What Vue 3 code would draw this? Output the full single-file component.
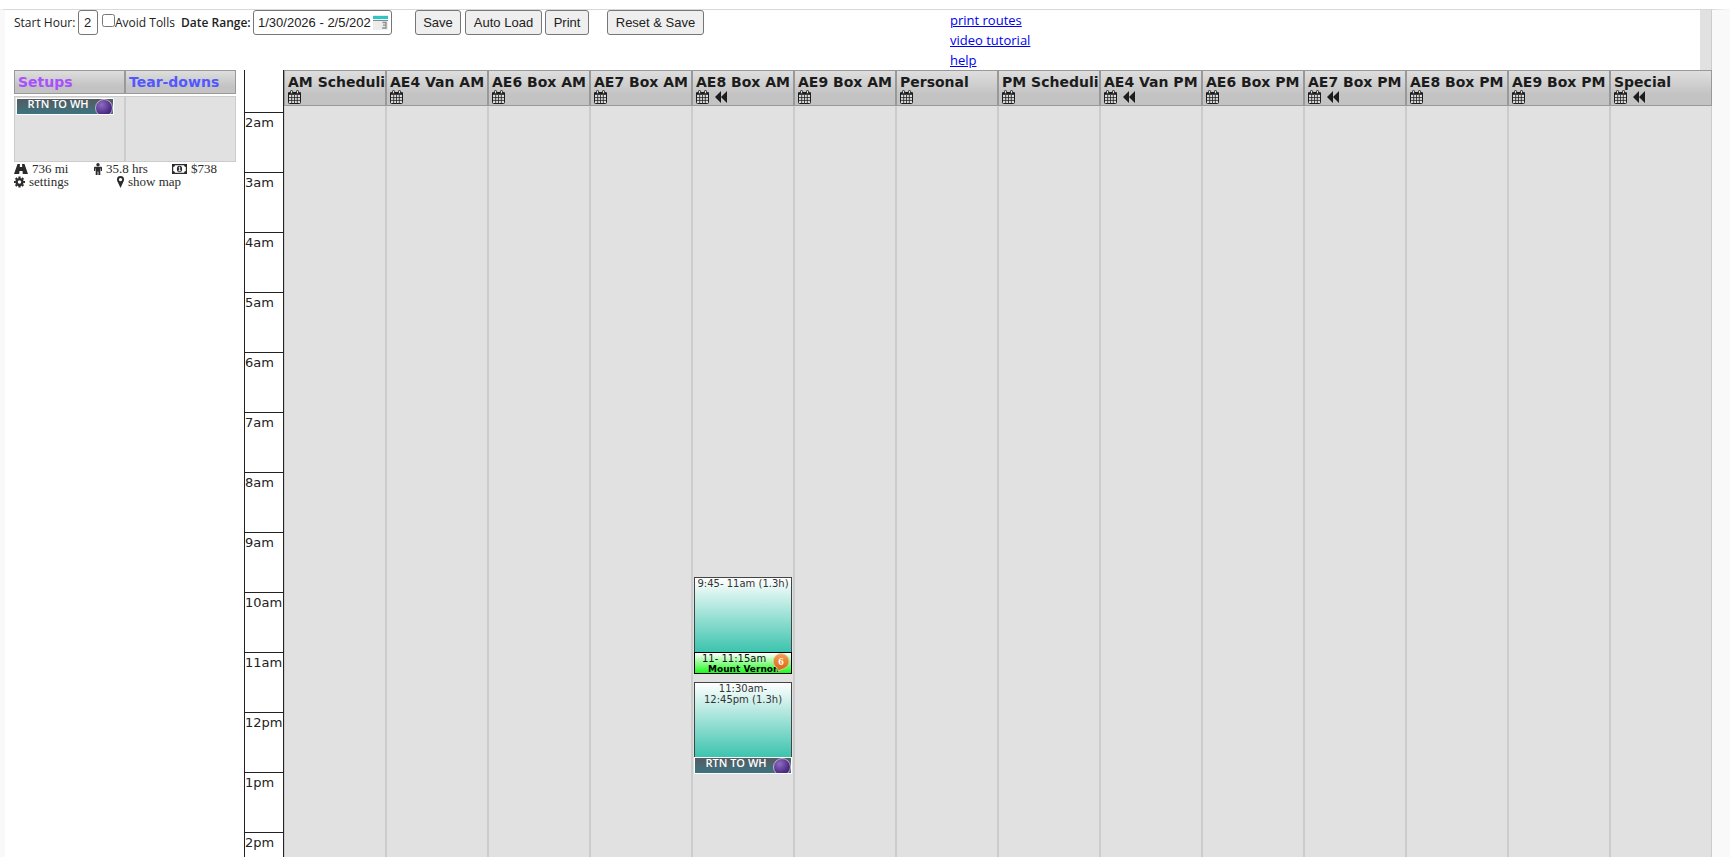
<script setup>
import { ref } from 'vue'

const startHour = ref('2')
const avoidTolls = ref(false)
const dateRange = ref('1/30/2026 - 2/5/2026')

const FIRST_HOUR = 2
const HOUR_HEIGHT = 60
const GRID_OFFSET = 6

const hours = ['2am', '3am', '4am', '5am', '6am', '7am', '8am', '9am', '10am', '11am', '12pm', '1pm', '2pm']

const events = [
  { kind: 'drive', start: 9.75, height: 76, lines: ['9:45- 11am (1.3h)'] },
  { kind: 'stop', start: 11, height: 22, lines: ['11- 11:15am'], place: 'Mount Vernon' },
  { kind: 'drive', start: 11.5, height: 76, lines: ['11:30am-', '12:45pm (1.3h)'] },
  { kind: 'return', start: 12.75, height: 17, lines: ['RTN TO WH'] },
]

const columns = [
  { name: 'AM Scheduling' },
  { name: 'AE4 Van AM' },
  { name: 'AE6 Box AM' },
  { name: 'AE7 Box AM' },
  { name: 'AE8 Box AM', rewind: true, events },
  { name: 'AE9 Box AM' },
  { name: 'Personal' },
  { name: 'PM Scheduling' },
  { name: 'AE4 Van PM', rewind: true },
  { name: 'AE6 Box PM' },
  { name: 'AE7 Box PM', rewind: true },
  { name: 'AE8 Box PM' },
  { name: 'AE9 Box PM' },
  { name: 'Special', rewind: true },
]

const place = (e) => ({
  top: `${GRID_OFFSET + (e.start - FIRST_HOUR) * HOUR_HEIGHT}px`,
  height: `${e.height}px`,
})
</script>

<template>
  <div class="page">
    <div class="sheet">
      <header class="toolbar">
        <form class="controls" @submit.prevent>
          <label for="start-hour">Start Hour:</label>
          <input id="start-hour" v-model="startHour" class="field hour" type="text" />
          <input id="avoid-tolls" v-model="avoidTolls" class="tick" type="checkbox" />
          <label for="avoid-tolls">Avoid Tolls</label>
          <label for="date-range" class="strong">Date Range:</label>
          <span class="date">
            <input id="date-range" v-model="dateRange" class="field" type="text" />
            <svg class="date-icon" viewBox="0 0 15 15" aria-hidden="true">
              <rect width="15" height="15" fill="#ececec" />
              <rect y="1" width="15" height="3" fill="#2fc5c5" />
              <rect y="4" width="15" height="1" fill="#e8fafa" />
              <rect y="5" width="15" height="1" fill="#888" />
              <path d="M9.500 7.500H13V13H9.200M10 10.200h3" fill="none" stroke="#8c8c8c" stroke-width="1.300" />
            </svg>
          </span>
          <button class="btn save" type="button">Save</button>
          <button class="btn load" type="button">Auto Load</button>
          <button class="btn print" type="button">Print</button>
          <button class="btn reset" type="button">Reset &amp; Save</button>
        </form>
        <nav class="links">
          <a href="#routes">print routes</a>
          <a href="#tutorial">video tutorial</a>
          <a href="#help">help</a>
        </nav>
        <div class="edge"></div>
      </header>

      <main class="board">
        <aside class="side">
          <div class="pair heads">
            <div class="cell head setups">Setups</div>
            <div class="cell head teardowns">Tear-downs</div>
          </div>
          <div class="pair bins">
            <div class="cell bin">
              <div class="event return chip">
                <span>RTN TO WH</span>
                <i class="orb"></i>
              </div>
            </div>
            <div class="cell bin"></div>
          </div>
          <div class="totals">
            <span class="stat miles">
              <svg width="14" height="12" viewBox="0 0 14 12" aria-hidden="true">
                <path d="M3.500 1H6l-.2 2h2.400L8 1h2.500L14 11H8.800l-.3-3h-3l-.3 3H0z" fill="#2b2b2b" />
                <path d="M6 4h2l.2 2.500H5.800z" fill="#2b2b2b" />
                <path d="M5.800 3.500h2.400" stroke="#fff" stroke-width="1" />
              </svg>
              736 mi
            </span>
            <span class="stat time">
              <svg width="8" height="12" viewBox="0 0 8 12" aria-hidden="true">
                <circle cx="4" cy="1.700" r="1.700" fill="#2b2b2b" />
                <path d="M1 3.700h6q1 0 1 1V8H6.800V5.500H6.300V12H4.400V8.500h-.8V12H1.700V5.500h-.5V8H0V4.700q0-1 1-1z" fill="#2b2b2b" />
              </svg>
              35.8 hrs
            </span>
            <span class="stat">
              <svg width="15" height="10" viewBox="0 0 15 10" aria-hidden="true">
                <path d="M0 0h15v10H0zM3 1.200Q2.800 2.800 1.200 3v4Q2.800 7.200 3 8.800h9Q12.200 7.200 13.800 7V3Q12.200 2.800 12 1.200z" fill="#2b2b2b" fill-rule="evenodd" />
                <ellipse cx="7.500" cy="5" rx="2.600" ry="3.200" fill="#2b2b2b" />
                <path d="M6.700 3.700l1-.7v3.600M6.400 6.800h2.400" fill="none" stroke="#fff" stroke-width="1" />
              </svg>
              $738
            </span>
          </div>
          <div class="totals">
            <span class="stat settings">
              <svg width="11" height="12" viewBox="0 0 12 12" aria-hidden="true">
                <circle cx="6" cy="6" r="3.200" fill="none" stroke="#2b2b2b" stroke-width="2.600" />
                <path d="M6 0v2M6 10v2M0 6h2M10 6h2M1.800 1.800l1.300 1.300M8.900 8.900l1.300 1.300M1.800 10.200l1.300-1.300M8.900 3.100l1.300-1.300" stroke="#2b2b2b" stroke-width="2.400" />
              </svg>
              settings
            </span>
            <span class="stat">
              <svg width="7" height="12" viewBox="0 0 7 12" aria-hidden="true">
                <path d="M3.500 0a3.500 3.500 0 0 1 3.500 3.600c0 1.200-.3 1.800-.7 2.500L3.500 12 .7 6.100C.3 5.400 0 4.800 0 3.600A3.500 3.500 0 0 1 3.500 0zm0 1.900a1.700 1.700 0 1 0 0 3.400 1.700 1.700 0 0 0 0-3.400z" fill="#2b2b2b" fill-rule="evenodd" />
              </svg>
              show map
            </span>
          </div>
        </aside>

        <div class="hours">
          <div class="hour-pad"></div>
          <div v-for="h in hours" :key="h" class="hour-row">{{ h }}</div>
        </div>

        <div class="columns">
          <section v-for="c in columns" :key="c.name" class="column">
            <div class="column-head">
              <div class="title">{{ c.name }}</div>
              <div class="tools">
                <svg width="13" height="14" viewBox="0 0 13 14" aria-hidden="true">
                  <rect x="0.500" y="2.500" width="12" height="11" rx="1" fill="#ddd" stroke="#1c1c1c" />
                  <path d="M0 2.500h13v2.300H0z" fill="#1c1c1c" />
                  <path d="M3.700 5v8M6.500 5v8M9.300 5v8M1 7.600h11M1 10.400h11" stroke="#1c1c1c" stroke-width="0.800" />
                  <rect x="2.500" y="0.500" width="2" height="3.200" rx="0.800" fill="#ddd" stroke="#1c1c1c" stroke-width="0.900" />
                  <rect x="8.500" y="0.500" width="2" height="3.200" rx="0.800" fill="#ddd" stroke="#1c1c1c" stroke-width="0.900" />
                </svg>
                <svg v-if="c.rewind" width="12" height="12" viewBox="0 0 12 12" aria-hidden="true">
                  <path d="M6 0v12L0 6zM12 0v12L6 6z" fill="#1c1c1c" />
                </svg>
              </div>
            </div>
            <div class="column-body">
              <div v-for="(e, i) in c.events" :key="i" class="event" :class="e.kind" :style="place(e)">
                <span v-for="l in e.lines" :key="l">{{ l }}</span>
                <b v-if="e.place">{{ e.place }}</b>
                <i v-if="e.kind === 'return'" class="orb"></i>
                <svg v-if="e.kind === 'stop'" class="pin" width="17" height="19" viewBox="0 0 17 19" aria-hidden="true">
                  <defs>
                    <linearGradient id="pin-fill" x1="0" y1="0" x2="0" y2="1">
                      <stop offset="0" stop-color="#f6a052" />
                      <stop offset="1" stop-color="#d95f0e" />
                    </linearGradient>
                  </defs>
                  <path d="M8.500.7a7.700 7.700 0 0 1 2 15.100q-2.700.6-5.500 2.600l-.2-3A7.700 7.700 0 0 1 8.500.7z" fill="url(#pin-fill)" stroke="#d9c9a0" stroke-width="1" />
                  <text x="8" y="12" text-anchor="middle">6</text>
                </svg>
              </div>
            </div>
          </section>
        </div>
      </main>
    </div>
  </div>
</template>

<style>
body {
  background: #fff;
}
</style>

<style scoped>
.page {
  box-sizing: border-box;
  height: 100vh;
  padding-top: 9px;
  overflow: hidden;
}

.page * {
  box-sizing: border-box;
}

.sheet {
  display: flex;
  flex-direction: column;
  height: 100%;
  border-top: 1px solid #d8d8d8;
  border-left: 5px solid #f9f9f9;
  border-right: 18px solid #f9f9f9;
}

.toolbar {
  display: grid;
  grid-template-columns: 945px 1fr 12px;
  flex: none;
  height: 60px;
}

.controls {
  display: flex;
  align-items: center;
  height: 25px;
  padding-left: 9px;
  color: #222;
  font: 12px/16px "Open Sans", "Noto Sans", sans-serif;
  white-space: nowrap;
}

.controls label[for="start-hour"] {
  width: 64px;
}

.controls label[for="avoid-tolls"] {
  width: 66px;
}

.controls .strong {
  width: 72px;
  font-weight: 600;
}

.field {
  width: 139px;
  height: 25px;
  padding: 0 4px;
  border: 1px solid #767676;
  border-radius: 3px;
  background: #fff;
  color: #222;
  font: 13px "Liberation Sans", Arial, sans-serif;
}

.hour {
  width: 20px;
  padding: 0 5px;
}

.tick {
  width: 13px;
  height: 13px;
  margin: 0 0 4px 4px;
}

.date {
  position: relative;
  display: flex;
  margin-right: 23px;
}

.date .field {
  padding-right: 20px;
}

.date-icon {
  position: absolute;
  top: 5px;
  right: 4px;
  width: 15px;
  height: 15px;
}

.btn {
  height: 25px;
  padding: 0;
  border: 1px solid #767676;
  border-radius: 3px;
  background: #efefef;
  color: #222;
  font: 13px "Liberation Sans", Arial, sans-serif;
}

.save {
  width: 46px;
  margin-right: 4px;
}

.load {
  width: 77px;
  margin-right: 3px;
}

.print {
  width: 44px;
  margin-right: 18px;
}

.reset {
  width: 97px;
}

.links {
  display: flex;
  flex-direction: column;
  align-items: flex-start;
  font: 13px/20px "Open Sans", "Noto Sans", sans-serif;
}

.links a {
  color: #00e;
}

.edge {
  border-right: 1px solid #ccc;
  background: #e1e1e1;
}

.board {
  display: flex;
  flex: 1;
  min-height: 0;
}

.side {
  flex: none;
  width: 239px;
  padding: 0 8px 0 9px;
}

.pair {
  display: grid;
  grid-template-columns: 1fr 1fr;
}

.heads {
  height: 24px;
  margin-bottom: 2px;
}

.bins {
  height: 66px;
}

.cell {
  border: 1px solid #ccc;
  background: #e1e1e1;
}

.head {
  padding-left: 3px;
  border-color: #999;
  background: linear-gradient(#dedede, #c3c3c3 70%);
  font: 700 14px/22px "DejaVu Sans", Verdana, sans-serif;
}

.setups {
  color: #a94fff;
}

.teardowns {
  color: #5257ff;
}

.bin {
  padding: 1px;
}

.totals {
  display: flex;
  height: 13px;
  color: #2b2b2b;
  font: 13px/13px "Liberation Serif", "Times New Roman", serif;
}

.stat {
  display: flex;
  align-items: center;
  gap: 4px;
}

.miles {
  width: 80px;
}

.time {
  width: 78px;
}

.settings {
  width: 103px;
}

.hours {
  flex: none;
  width: 40px;
  border-left: 1px solid #222;
  border-right: 1px solid #222;
  overflow: hidden;
  color: #222;
  font: 13px/20px "DejaVu Sans", Verdana, sans-serif;
}

.hour-pad {
  height: 42px;
}

.hour-row {
  height: 60px;
  border-top: 1px solid #222;
}

.columns {
  display: flex;
  flex: 1;
  min-width: 0;
}

.column {
  display: flex;
  flex: 1 1 0;
  flex-direction: column;
  min-width: 0;
}

.column-head {
  flex: none;
  height: 36px;
  padding-left: 3px;
  border: 1px solid #999;
  background: linear-gradient(#dedede, #c3c3c3 70%);
  overflow: hidden;
}

.title {
  height: 19px;
  overflow: hidden;
  color: #1c1c1c;
  font: 700 14px/22px "DejaVu Sans", Verdana, sans-serif;
  white-space: nowrap;
}

.tools {
  display: flex;
  align-items: center;
  gap: 6px;
  height: 14px;
}

.column-body {
  position: relative;
  flex: 1;
  border: 1px solid #ccc;
  border-top: 0;
  border-bottom: 0;
  background: #e1e1e1;
}

.event {
  position: absolute;
  right: 1px;
  left: 1px;
  display: flex;
  flex-direction: column;
  align-items: center;
  border: 1px solid #444;
  overflow: hidden;
  color: #333;
  font: 10px/11px "DejaVu Sans", Verdana, sans-serif;
  white-space: nowrap;
}

.drive {
  background: linear-gradient(#fff, #3cc4ae);
}

.stop {
  z-index: 1;
  align-items: flex-start;
  padding-left: 7px;
  border-color: #000;
  background: linear-gradient(#fff, #1dfa1d);
  color: #111;
}

.stop b {
  padding-left: 6px;
  color: #000;
  font-size: 9px;
}

.return {
  z-index: 1;
  padding-right: 14px;
  border-color: #fff;
  background: linear-gradient(#545b61, #3c7480);
  color: #fff;
  font: 600 11px/10px "Open Sans", "Noto Sans", sans-serif;
}

.chip {
  position: relative;
  right: auto;
  left: auto;
  width: 98px;
  height: 17px;
}

.orb {
  position: absolute;
  top: 0;
  right: 0;
  width: 18px;
  height: 18px;
  border: 1px solid #b9b3c4;
  border-radius: 50%;
  background: radial-gradient(circle at 35% 30%, #8e6cc4, #4f2d86 60%, #37206a);
}

.pin {
  position: absolute;
  top: 0;
  right: 1px;
}

.pin text {
  fill: #fff;
  font: 700 11px "Liberation Serif", serif;
}
</style>
